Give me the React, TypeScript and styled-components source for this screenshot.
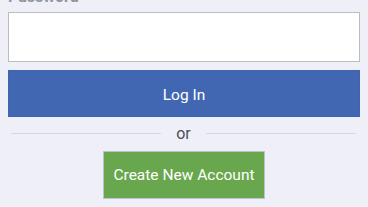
import React from "react";
import styled, { createGlobalStyle } from "styled-components";

const Global = createGlobalStyle`
  html, body { margin: 0; padding: 0; background: #eeeff7; overflow: hidden; }
  body { font-family: Roboto, "Noto Sans", "Liberation Sans", sans-serif; }
`;

const Page = styled.div`
  display: flex;
  flex-direction: column;
  margin: -13px 8px 0;
`;

const Label = styled.div`
  font-size: 16px;
  line-height: 20px;
  font-weight: 700;
  color: #90949c;
  margin-bottom: 5px;
`;

const Input = styled.input`
  box-sizing: border-box;
  width: 100%;
  height: 50px;
  margin: 0;
  border: 1px solid #bdbdbd;
  background: #fff;
  outline: none;
  font-size: 16px;
  padding: 0 10px;
`;

const Button = styled.button<{ $tone: "blue" | "green" }>`
  box-sizing: border-box;
  font-family: inherit;
  font-size: 15.5px;
  color: #fff;
  white-space: nowrap;
  border: 1px solid ${(p) => (p.$tone === "blue" ? "#3f63ad" : "#bcc3cf")};
  background: ${(p) => (p.$tone === "blue" ? "#4267b2" : "#69a74e")};
  height: ${(p) => (p.$tone === "blue" ? "47px" : "48px")};
  padding: ${(p) => (p.$tone === "blue" ? "3px 0 0" : "0")};
  margin: 0;
`;

const LoginButton = styled(Button)`
  width: 100%;
  margin-top: 8px;
`;

const CreateButton = styled(Button)`
  align-self: center;
  width: 162px;
`;

const Divider = styled.div`
  display: flex;
  align-items: center;
  gap: 15px;
  margin: 6px 4px 8px 3px;
  height: 20px;
  color: #4b4f56;
  font-size: 16px;
`;

const Line = styled.div`
  flex: 1;
  height: 1px;
  background: #d6d8de;
`;

export default function App() {
  return (
    <>
      <Global />
      <Page>
        <Label>Password</Label>
        <Input type="password" />
        <LoginButton $tone="blue">Log In</LoginButton>
        <Divider>
          <Line />
          <span>or</span>
          <Line />
        </Divider>
        <CreateButton $tone="green">Create New Account</CreateButton>
      </Page>
    </>
  );
}
